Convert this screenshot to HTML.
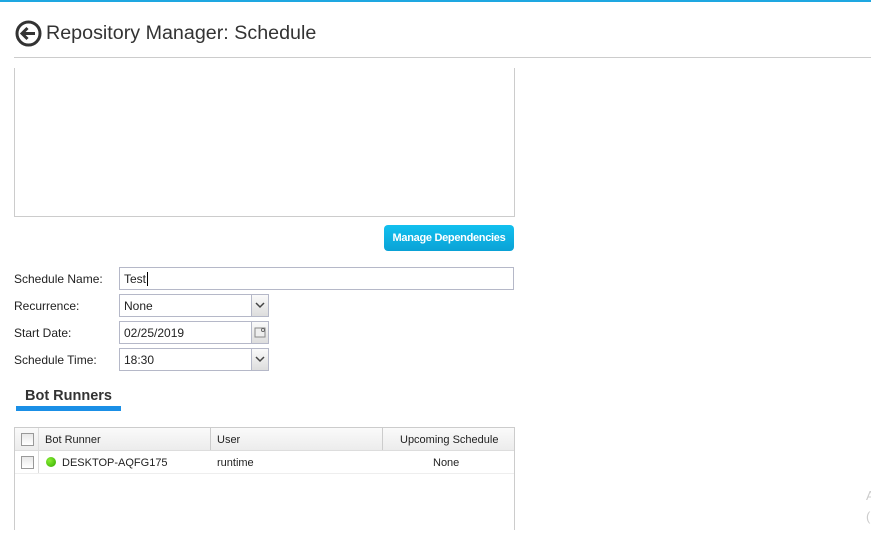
<!DOCTYPE html>
<html><head><style>
body{margin:0;width:871px;height:560px;background:#fff;font-family:"Liberation Sans",sans-serif;font-size:11px;color:#222;position:relative;overflow:hidden}
.a{position:absolute}
.lbl{left:14px;font-size:12px}
.inp{border:1px solid #b5b8c8;background:#fff;box-sizing:border-box;font-size:12px;padding:4px 4px 2px;height:23px;line-height:15px}
.dd{position:absolute;right:0;top:0;width:16px;height:21px;background:linear-gradient(#fafafa,#ddd);border-left:1px solid #b5b8c8}
.cb{position:absolute;width:11px;height:11px;border:1px solid #999;background:linear-gradient(#e8e8e8,#fff)}
</style></head><body>
<div class="a" style="left:0;top:0;width:871px;height:2px;background:#1ea7e1"></div>
<svg class="a" style="left:15px;top:20px" width="27" height="27" viewBox="0 0 27 27"><circle cx="13.5" cy="13.5" r="11.5" fill="none" stroke="#333" stroke-width="3"/><path d="M7 13.5h13M12.5 8l-5.5 5.5 5.5 5.5" fill="none" stroke="#333" stroke-width="3"/></svg>
<div class="a" style="left:46px;top:22px;font-size:19.7px;color:#333">Repository Manager: Schedule</div>
<div class="a" style="left:14px;top:57px;width:857px;height:1px;background:#ccc"></div>
<div class="a" style="left:14px;top:68px;width:499px;height:148px;border:1px solid #ccc;border-top:none"></div>
<div class="a" style="left:384px;top:225px;width:130px;height:26px;border-radius:4px;background:linear-gradient(#12c0ef,#0aa2d6);color:#fff;font-size:11px;font-weight:bold;text-align:center;line-height:27px;letter-spacing:-0.3px">Manage Dependencies</div>
<div class="a lbl" style="top:272px">Schedule Name:</div>
<div class="a inp" style="left:119px;top:267px;width:395px">Test<span style="border-left:1px solid #000;margin-left:1px"></span></div>
<div class="a lbl" style="top:299px">Recurrence:</div>
<div class="a inp" style="left:119px;top:294px;width:150px">None<div class="dd"><svg width="16" height="21"><path d="M4 8l4 4 4-4" fill="none" stroke="#444" stroke-width="1.5"/></svg></div></div>
<div class="a lbl" style="top:326px">Start Date:</div>
<div class="a inp" style="left:119px;top:321px;width:150px">02/25/2019<div class="dd"><svg width="16" height="21"><rect x="3" y="6" width="10" height="9" fill="#eee" stroke="#888"/><circle cx="11" cy="8" r="1.5" fill="#fff" stroke="#666"/></svg></div></div>
<div class="a lbl" style="top:353px">Schedule Time:</div>
<div class="a inp" style="left:119px;top:348px;width:150px">18:30<div class="dd"><svg width="16" height="21"><path d="M4 8l4 4 4-4" fill="none" stroke="#444" stroke-width="1.5"/></svg></div></div>
<div class="a" style="left:25px;top:388px;font-size:14.5px;font-weight:bold;color:#333">Bot Runners</div>
<div class="a" style="left:16px;top:406px;width:105px;height:5px;background:#1a8fe6"></div>
<div class="a" style="left:14px;top:427px;width:499px;height:102px;border:1px solid #ccc;border-bottom:none"></div>
<div class="a" style="left:15px;top:428px;width:499px;height:22px;background:linear-gradient(#fafafa,#ececec);border-bottom:1px solid #ddd"></div>
<div class="a" style="left:38px;top:428px;width:1px;height:45px;background:#ddd"></div>
<div class="a" style="left:210px;top:428px;width:1px;height:22px;background:#ccc"></div>
<div class="a" style="left:382px;top:428px;width:1px;height:22px;background:#ccc"></div>
<div class="cb" style="left:21px;top:433px"></div>
<div class="a" style="left:45px;top:434px">Bot Runner</div>
<div class="a" style="left:217px;top:434px">User</div>
<div class="a" style="left:400px;top:434px">Upcoming Schedule</div>
<div class="a" style="left:15px;top:473px;width:499px;height:1px;background:#eee"></div>
<div class="cb" style="left:21px;top:456px"></div>
<div class="a" style="left:46px;top:457px;width:10px;height:10px;border-radius:50%;background:radial-gradient(circle at 35% 35%,#8e3,#3a0)"></div>
<div class="a" style="left:62px;top:457px">DESKTOP-AQFG175</div>
<div class="a" style="left:217px;top:457px">runtime</div>
<div class="a" style="left:433px;top:457px">None</div>
<div class="a" style="left:866px;top:488px;color:#ccc;font-size:13px">A</div>
<div class="a" style="left:866px;top:509px;color:#ccc;font-size:13px">(</div>
</body></html>
